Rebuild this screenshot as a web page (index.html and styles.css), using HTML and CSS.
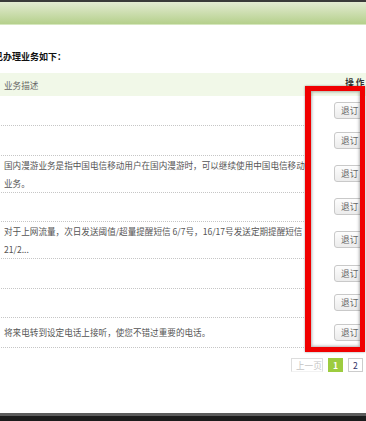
FILE: index.html
```html
<!DOCTYPE html>
<html lang="zh-CN">
<head>
  <meta charset="UTF-8">
  <meta name="viewport" content="width=device-width, initial-scale=1">
  <title>已办理业务</title>
  <link rel="stylesheet" href="styles.css">
</head>
<body>
  <div class="topbar"></div>
  <div class="banner"></div>

  <div class="main">
    <h3 class="title">已办理业务如下：</h3>
    <table class="biz">
      <thead>
        <tr><th class="desc">业务描述</th><th class="op">操 作</th></tr>
      </thead>
      <tbody>
        <tr><td class="desc"></td><td class="op"><button>退订</button></td></tr>
        <tr><td class="desc"></td><td class="op"><button>退订</button></td></tr>
        <tr><td class="desc">国内漫游业务是指中国电信移动用户在国内漫游时，可以继续使用中国电信移动业务。</td><td class="op"><button>退订</button></td></tr>
        <tr><td class="desc"></td><td class="op"><button>退订</button></td></tr>
        <tr><td class="desc">对于上网流量，次日发送阈值/超量提醒短信 6/7号，16/17号发送定期提醒短信21/2...</td><td class="op"><button>退订</button></td></tr>
        <tr><td class="desc"></td><td class="op"><button>退订</button></td></tr>
        <tr><td class="desc"></td><td class="op"><button>退订</button></td></tr>
        <tr><td class="desc">将来电转到设定电话上接听，使您不错过重要的电话。</td><td class="op"><button>退订</button></td></tr>
      </tbody>
    </table>

    <div class="pager">
      <span class="prev">上一页</span>
      <span class="cur">1</span>
      <span class="num">2</span>
      <span class="num">3</span>
      <span class="next">下一页</span>
    </div>
  </div>

  <div class="mark"></div>

  <div class="footer"></div>
</body>
</html>
```

FILE: styles.css
```css
html, body {
  height: 100%;
}
body {
  margin: 0;
  display: flex;
  flex-direction: column;
  overflow: hidden;
  position: relative;
  background: #fff;
  font-family: "Noto Sans CJK SC", "Noto Sans", sans-serif;
  font-size: 8.6px;
  color: #555;
}
.topbar {
  height: 2px;
  background: #3a3a3a;
}
.banner {
  height: 22px;
  background: linear-gradient(#e3ebd2, #b5d08c);
  border-bottom: 1px solid #d6e7bf;
}
.main {
  width: 440px;
  flex-shrink: 0;
  margin-left: -6px;
}
.title {
  margin: 26px 0 10px;
  font-size: 9px;
  line-height: 12px;
  font-weight: bold;
  color: #111;
}
.biz {
  border-collapse: collapse;
  border-spacing: 0;
}
.biz thead tr {
  height: 23px;
}
.biz th {
  padding: 0;
  background: #f1f8e8;
  font-weight: normal;
  text-align: left;
  line-height: 12px;
}
.biz th.desc {
  padding-left: 10px;
  color: #666;
}
.biz th.op {
  vertical-align: top;
  padding: 3px 0 0 39px;
  color: #333;
  font-weight: bold;
}
.biz td {
  padding: 0;
  vertical-align: middle;
  line-height: 18px;
}
.biz td.desc {
  width: 303px;
  padding-left: 10px;
  border-bottom: 1px dotted #c6c6c6;
}
.biz td.op {
  width: 100px;
  padding: 6px 0 6.5px 28px;
}
.biz button {
  display: block;
  width: 31px;
  height: 17px;
  padding: 0;
  border: 1px solid #c9c9c9;
  border-radius: 3px;
  background: linear-gradient(#fdfdfd, #ececec);
  font-family: inherit;
  font-size: 8.6px;
  line-height: 15px;
  color: #666;
}
.pager {
  display: flex;
  gap: 5px;
  margin-top: 10px;
  padding-left: 297px;
}
.pager span {
  height: 14px;
  line-height: 13px;
  padding: 0 4px;
  border: 1px solid #ddd;
  border-bottom-color: #f2f2f2;
  box-sizing: border-box;
  white-space: nowrap;
}
.pager .prev,
.pager .next {
  width: 32px;
  color: #c4c4c4;
  text-align: center;
}
.pager .cur {
  background: #9dcc3f;
  border-color: #9dcc3f;
  color: #fff;
  font-weight: bold;
}
.pager .num {
  color: #336;
  border-color: #ccc;
}
.mark {
  position: absolute;
  left: 305px;
  top: 86px;
  width: 60px;
  height: 266px;
  box-sizing: border-box;
  border: 5px solid #f00000;
  border-left-width: 6px;
  box-shadow: inset 0 0 3px 1px rgba(0, 0, 0, 0.3), 0 0 2px rgba(0, 0, 0, 0.4);
}
.footer {
  margin-top: auto;
  height: 5px;
  border-top: 3px solid #5c5c5c;
  background: #1c1c1c;
}
```
